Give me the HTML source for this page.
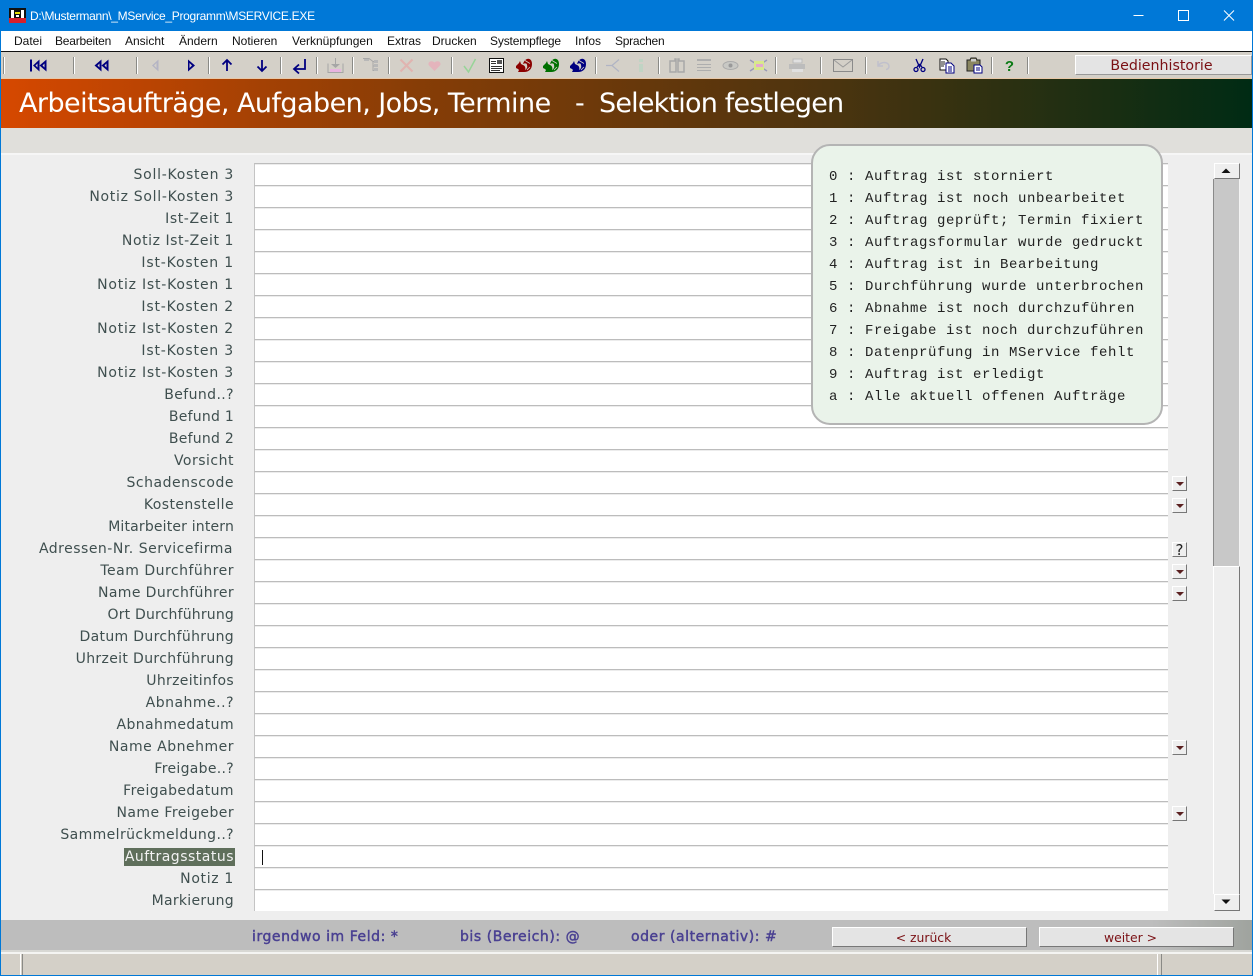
<!DOCTYPE html>
<html lang="de"><head><meta charset="utf-8"><title>MSERVICE</title>
<style>
html,body{margin:0;padding:0}
body{width:1253px;height:976px;position:relative;overflow:hidden;background:#eee;font-family:"Liberation Sans",sans-serif}
.a{position:absolute}
#tb{left:0;top:0;width:1253px;height:31px;background:#0078d7;color:#fff;font-size:12px}
#mn{left:1px;top:31px;width:1251px;height:20px;background:#fff;border-bottom:1px solid #111;font-size:12px;color:#111}
#mn span{position:absolute;top:3px;white-space:nowrap}
#bar{left:1px;top:52px;width:1251px;height:26px;background:#d4d0c8;border-bottom:1px solid #e8c8a8}
#hd{left:1px;top:79px;width:1251px;height:49px;background:linear-gradient(90deg,#d64800 0%,#873d06 33%,#4c340f 66%,#002b14 100%);color:#fff;font:27px/50px "DejaVu Sans",sans-serif;white-space:pre}
#hd span{position:absolute;top:0}
#bd{left:1px;top:128px;width:1251px;height:25px;background:#e0dfdb}
#lb{left:1px;top:164px;width:233px;font:14px/22px "DejaVu Sans",sans-serif;letter-spacing:.5px;color:#3f4f4f;text-align:right}
#lb div{height:22px;white-space:nowrap}
#lb i{font-style:normal;background:#5f6f5b;color:#f2f2f2;display:inline-block;line-height:18px;margin-right:-1px;padding:0 1px}
#fd{left:254px;top:163px;width:914px}
#fd div{height:22px;box-sizing:border-box;background:#fff;border-top:1px solid #bcbcbc;border-left:1px solid #c4c4c4;box-shadow:inset 0 1px 0 #ececec}
#pop{left:811px;top:144px;width:348px;height:277px;background:#eaf3ea;border:2px solid #b4b4b4;border-radius:19px}
#pop pre{margin:0;position:absolute;left:16px;top:20px;font:14px/22px "Liberation Mono",monospace;letter-spacing:.6px;color:#222}
.dd{position:absolute;left:1172px;width:13px;height:13px;background:#eee;border:1px solid;border-color:#fff #777 #777 #fff}
.dd:after{content:"";position:absolute;left:3px;top:5px;border:4px solid transparent;border-top:4px solid #5a2020;border-bottom:0}
#q{position:absolute;left:1172px;top:542px;width:13px;height:13px;background:#eee;border:1px solid;border-color:#fff #777 #777 #fff;font:15px/14px "DejaVu Sans",sans-serif;color:#222;text-align:center}
.sb{position:absolute;left:1214px;width:24px;background:#eee;border:1px solid;border-color:#fff #777 #777 #fff}
#bt{left:1px;top:920px;width:1251px;height:30px;background:linear-gradient(90deg,#bdbdbd 0,#bdbdbd 92%,#9fa39e 100%)}
.nt{position:absolute;top:928px;font:14px/18px "DejaVu Sans",sans-serif;-webkit-text-stroke:.45px #4a4192;letter-spacing:.55px;color:#4a4192;white-space:nowrap}
.bn{position:absolute;top:927px;height:18px;background:#e4e4e4;border:1px solid;border-color:#fff #777 #777 #fff;color:#7a1014;font:12.400px/20px "DejaVu Sans",sans-serif;text-align:center}
#st{left:1px;top:950px;width:1251px;height:25px;background:#d4d0c8}
</style></head><body>
<div class="a" id="tb">
<svg class="a" style="left:9px;top:8px" width="17" height="15" viewBox="0 0 17 15"><rect width="17" height="15" fill="#111"/><rect x="0" y="10" width="17" height="5" fill="#d8202c"/><rect x="2" y="2" width="3" height="8" fill="#fff"/><rect x="12" y="2" width="3" height="8" fill="#fff"/><rect x="6" y="4" width="5" height="2" fill="#e8e000"/><rect x="7" y="7" width="3" height="2" fill="#fff"/></svg>
<span class="a" style="left:30px;top:9px;white-space:nowrap;letter-spacing:-.29px">D:\Mustermann\_MService_Programm\MSERVICE.EXE</span>
<svg class="a" style="left:1130px;top:8px" width="110" height="16"><path d="M3.5 7.5h10" stroke="#fff"/><rect x="48.5" y="2.5" width="10" height="10" fill="none" stroke="#fff"/><path d="M94 2.5l10 10M104 2.5l-10 10" stroke="#fff" fill="none"/></svg>
</div>
<div class="a" id="mn"><span style="left:13px">Datei</span><span style="left:54px;letter-spacing:-.2px">Bearbeiten</span><span style="left:124px">Ansicht</span><span style="left:178px">Ändern</span><span style="left:231px">Notieren</span><span style="left:291px">Verknüpfungen</span><span style="left:386px">Extras</span><span style="left:431px">Drucken</span><span style="left:489px;letter-spacing:-.15px">Systempflege</span><span style="left:574px">Infos</span><span style="left:614px;letter-spacing:-.25px">Sprachen</span></div>
<div class="a" id="bar"></div>
<svg class="a" style="left:0;top:52px" width="1070" height="26" viewBox="0 52 1070 26">
<defs>
<g id="sq"><path d="M-1-1C1-8 8-8 8-1 8 4 5 7 0 7L-2 7C2 5 4 3 3 0 3-2 1-2-1-1z"/><path d="M-8 1L-5-2-4-4-3-1-1 0C2 1 2 5 0 7L-6 7-5 5-6 4-8 3z"/><path d="M1-4.500L6-1.500M3 5L6 2" stroke="#d4d0c8" stroke-width=".8" fill="none"/></g>
</defs>
<g stroke="#8a8a86" stroke-width="1"><path d="M3.5 57v17M73.5 57v17M136.5 57v17M208.5 57v17M280.5 57v17M316.5 57v17M352.5 57v17M388.5 57v17M451.5 57v17M595.5 57v17M658.5 57v17M775.5 57v17M820.5 57v17M865.5 57v17M991.5 57v17M1027.5 57v17"/></g>
<g stroke="#fff" stroke-width="1"><path d="M4.5 57v17M74.5 57v17M137.5 57v17M209.5 57v17M281.5 57v17M317.5 57v17M353.5 57v17M389.5 57v17M452.5 57v17M596.5 57v17M659.5 57v17M776.5 57v17M821.5 57v17M866.5 57v17M992.5 57v17M1028.5 57v17"/></g>
<g fill="#000080">
<path d="M30 59.500h2v12h-2zM39.500 59.500v12l-6.500-6zM46.500 59.500v12l-7-6z"/>
<path d="M101.500 59.500v12l-7-6zM108.500 59.500v12l-7-6z"/>
<path d="M195 65.500l-7-6v12z"/>
</g>
<path d="M158.500 59.500v12l-6.500-6z" fill="#b4b4c4"/><path d="M156.500 63v5l-2.500-2.500z" fill="#d4d0c8"/>
<path d="M189.500 63v5l2.500-2.500z" fill="#d4d0c8"/>
<path d="M37.500 63.500v4l-2-2z" fill="#d4d0c8"/><path d="M44.500 63.500v4l-2-2z" fill="#d4d0c8"/>
<path d="M99.500 63.500v4l-2-2z" fill="#d4d0c8"/><path d="M106.500 63.500v4l-2-2z" fill="#d4d0c8"/>
<g fill="none" stroke="#000080" stroke-width="1.800">
<path d="M227 71V60M222.500 64.500l4.500-4.500 4.500 4.500"/>
<path d="M262 60v11M257.500 66.500l4.500 4.500 4.500-4.500"/>
<path d="M305 59v10h-10M299 64.500l-5 4.500 5 4.500"/>
</g>
<g fill="none" stroke="#a6a6a6">
<path d="M328 63.500v9h15v-9"/><path d="M335.500 58v6"/>
</g>
<path d="M331 64h9l-4.500 4z" fill="#a6a6a6"/><rect x="330" y="69" width="11" height="3" fill="#e8b4e0"/>
<g fill="none" stroke="#a8a8a8"><path d="M363 58.500h6l4 3h5M373 61.500v9h5M373 66h5"/></g>
<path d="M364 59h5v2h-5zM374 60h4v3h-4zM374 64h4v3h-4zM374 68h4v3h-4z" fill="#b8b8b8"/>
<path d="M400.500 59.500l12 12M412.500 59.500l-12 12" stroke="#e0b4b0" stroke-width="2.200" fill="none"/>
<path d="M434.500 71l-5.500-5.500c-2-3 2-6 5.500-3 3.500-3 7.500 0 5.500 3z" fill="#e4b4bc"/>
<path d="M464 66l4.500 6 7-13" stroke="#98d498" stroke-width="1.500" fill="none"/>
<rect x="489.500" y="58.500" width="14" height="14" fill="#fff" stroke="#111"/>
<path d="M491 61.500h5M491 63.500h5M491 66.500h11M491 68.500h11M491 70.500h9" stroke="#333" fill="none"/><rect x="497" y="60" width="5" height="4" fill="#555"/>
<use href="#sq" x="524" y="65" fill="#8b0000"/>
<use href="#sq" x="551" y="65" fill="#007000"/>
<use href="#sq" x="578" y="65" fill="#000080"/>
<path d="M606 65.500h6l7-6M612 65.500l7 6" stroke="#b0b4c4" fill="none" stroke-width="1.200"/>
<rect x="639" y="59" width="4" height="3" fill="#c0d4c4"/><rect x="639" y="64" width="4" height="8" fill="#c0d4c4"/>
<path d="M670 61h5v-2h1v13h-6zM678 59h1v2h5v11h-6z" fill="none" stroke="#a8a8a8" stroke-width="1.500"/>
<path d="M697 59h14v2h-14zM697 64h14v1h-14zM697 67h14v1h-14zM697 70h14v1h-14z" fill="#aeaeae"/>
<ellipse cx="730.500" cy="65.500" rx="7.500" ry="4" fill="#c8c8c4" stroke="#aaa"/><circle cx="730.500" cy="65.500" r="2" fill="#999"/>
<path d="M750 60l17 11M767 60l-17 11" stroke="#9a9ab8" stroke-width="1.500"/><rect x="754" y="61" width="10" height="9" fill="#d8e88c"/><rect x="756" y="64" width="7" height="3" fill="#e4a8d0"/>
<path d="M793 59h9v4h-9z" fill="#e0e0e0" stroke="#bbb"/><path d="M789 64h16v5h-16z" fill="#bcbcbc"/><path d="M792 69h11v3h-11z" fill="#e0e0e0"/>
<rect x="833.500" y="59.500" width="19" height="12" fill="none" stroke="#8a8a8a"/><path d="M834 60l9 7 9-7" fill="none" stroke="#9a9a9a"/>
<path d="M878 61v5h5M878 65.500c5-5 11-3 11 1 0 2-2 3-3 3" fill="none" stroke="#c0c0cc" stroke-width="1.500"/>
<g fill="none" stroke="#000080" stroke-width="1.300"><path d="M916 59l3.500 8 3.500-8M919.500 64l-2.500 3M919.500 64l2.500 3"/><circle cx="916" cy="69.500" r="2"/><circle cx="923" cy="69.500" r="2"/></g>
<path d="M940 59h6l2 2v3h-2v6h-6z" fill="#fff" stroke="#111"/><path d="M946 63h5l3 3v7h-8z" fill="#fff" stroke="#000080"/><path d="M948 67h4M948 69h4M948 71h4" stroke="#000080" fill="none"/><path d="M941 62h4M941 64h4M941 66h3" stroke="#222" fill="none"/>
<path d="M967 60h3l1-2h5l1 2h3v5h-4v6h-9z" fill="#8a8660" stroke="#222"/><rect x="971" y="59" width="5" height="2.500" fill="#ccc"/><path d="M974 65h6l2 2v6h-8z" fill="#fff" stroke="#000080"/><path d="M976 68h4M976 70h4" stroke="#000080" fill="none"/>
<text x="1009.500" y="71" font-family="Liberation Sans,sans-serif" font-size="15" font-weight="bold" fill="#0a7a14" text-anchor="middle">?</text>
</svg>
<div class="a" style="left:1075px;top:55px;width:171px;padding-right:4px;height:18px;background:#e4e4e4;border:1px solid;border-color:#fff #999 #999 #fff;color:#7a1014;font:14.200px/20px 'DejaVu Sans',sans-serif;text-align:center">Bedienhistorie</div>
<div class="a" id="hd"><span style="left:18px;letter-spacing:-.55px">Arbeitsaufträge, Aufgaben, Jobs, Termine</span><span style="left:574px">-</span><span style="left:598px;letter-spacing:-.8px">Selektion festlegen</span></div>
<div class="a" id="bd"></div>
<div class="a" style="left:1px;top:153px;width:1251px;height:2px;background:#f6f6f6"></div>
<div class="a" id="lb">
<div style="letter-spacing:.73px">Soll-Kosten 3</div><div style="letter-spacing:.71px">Notiz Soll-Kosten 3</div><div style="letter-spacing:.6px">Ist-Zeit 1</div><div style="letter-spacing:.56px">Notiz Ist-Zeit 1</div><div style="letter-spacing:.83px">Ist-Kosten 1</div><div style="letter-spacing:.78px">Notiz Ist-Kosten 1</div><div style="letter-spacing:.83px">Ist-Kosten 2</div><div style="letter-spacing:.78px">Notiz Ist-Kosten 2</div><div style="letter-spacing:.83px">Ist-Kosten 3</div><div style="letter-spacing:.78px">Notiz Ist-Kosten 3</div><div style="letter-spacing:.4px">Befund..?</div><div style="letter-spacing:.25px">Befund 1</div><div style="letter-spacing:.25px">Befund 2</div><div>Vorsicht</div><div>Schadenscode</div><div style="letter-spacing:.42px">Kostenstelle</div><div style="letter-spacing:.17px">Mitarbeiter intern</div><div style="padding-right:1px">Adressen-Nr. Servicefirma</div><div>Team Durchführer</div><div style="letter-spacing:.38px">Name Durchführer</div><div style="letter-spacing:.19px">Ort Durchführung</div><div style="letter-spacing:.33px">Datum Durchführung</div><div style="letter-spacing:.35px">Uhrzeit Durchführung</div><div style="letter-spacing:.33px">Uhrzeitinfos</div><div>Abnahme..?</div><div style="letter-spacing:.42px">Abnahmedatum</div><div>Name Abnehmer</div><div style="letter-spacing:.3px">Freigabe..?</div><div style="letter-spacing:.42px">Freigabedatum</div><div style="letter-spacing:.43px">Name Freigeber</div><div style="letter-spacing:.4px">Sammelrückmeldung..?</div><div><i>Auftragsstatus</i></div><div style="letter-spacing:.67px">Notiz 1</div><div style="letter-spacing:.3px">Markierung</div>
</div>
<div class="a" id="fd">
<div></div><div></div><div></div><div></div><div></div><div></div><div></div><div></div><div></div><div></div><div></div><div></div><div></div><div></div><div></div><div></div><div></div><div></div><div></div><div></div><div></div><div></div><div></div><div></div><div></div><div></div><div></div><div></div><div></div><div></div><div></div><div></div><div></div><div></div>
</div>
<div class="a" style="left:262px;top:850px;width:1px;height:15px;background:#111"></div>
<div class="a" id="pop"><pre>0 : Auftrag ist storniert
1 : Auftrag ist noch unbearbeitet
2 : Auftrag geprüft; Termin fixiert
3 : Auftragsformular wurde gedruckt
4 : Auftrag ist in Bearbeitung
5 : Durchführung wurde unterbrochen
6 : Abnahme ist noch durchzuführen
7 : Freigabe ist noch durchzuführen
8 : Datenprüfung in MService fehlt
9 : Auftrag ist erledigt
a : Alle aktuell offenen Aufträge</pre></div>
<div class="dd" style="top:476px"></div><div class="dd" style="top:498px"></div><div id="q">?</div><div class="dd" style="top:564px"></div><div class="dd" style="top:586px"></div><div class="dd" style="top:740px"></div><div class="dd" style="top:806px"></div>
<div class="a" style="left:1213px;top:179px;width:25px;height:387px;background:#c8c8c8;border-left:1px solid #8a8a8a;border-right:1px solid #f4f4f4"></div>
<div class="a" style="left:1213px;top:566px;width:25px;height:327px;background:#eee;border-left:1px solid #fff;border-top:1px solid #fff;border-right:1px solid #777;box-sizing:content-box"></div>
<div class="sb" style="top:163px;height:14px"></div>
<svg class="a" style="left:1220px;top:168px" width="12" height="6"><path d="M6 0.500l4.500 4.500h-9z" fill="#111"/></svg>
<div class="sb" style="top:894px;height:15px"></div>
<svg class="a" style="left:1220px;top:899px" width="12" height="6"><path d="M1.500 0.500h9l-4.500 4.500z" fill="#111"/></svg>
<div class="a" id="bt"></div>
<span class="nt" style="left:252px">irgendwo im Feld: *</span>
<span class="nt" style="left:460px">bis (Bereich): @</span>
<span class="nt" style="left:631px">oder (alternativ): #</span>
<div class="bn" style="left:832px;width:181px;padding-right:12px">&lt; zurück</div>
<div class="bn" style="left:1039px;width:181px;padding-right:12px">weiter &gt;</div>
<div class="a" id="st">
<div class="a" style="left:0;top:0;width:1251px;height:2px;background:#d8d8d4"></div>
<div class="a" style="left:0;top:2px;width:1251px;height:2px;background:#f4f4f2"></div>
<div class="a" style="left:19px;top:4px;width:1px;height:21px;background:#fff"></div>
<div class="a" style="left:21px;top:4px;width:1px;height:21px;background:#8a8a86"></div>
<div class="a" style="left:1156px;top:4px;width:1px;height:21px;background:#fff"></div>
<div class="a" style="left:1160px;top:4px;width:1px;height:21px;background:#8a8a86"></div>
</div>
<div class="a" style="left:0;top:0;width:1px;height:976px;background:#0078d7"></div>
<div class="a" style="left:1252px;top:0;width:1px;height:976px;background:#0078d7"></div>
<div class="a" style="left:0;top:975px;width:1253px;height:1px;background:#0078d7"></div>
</body></html>
